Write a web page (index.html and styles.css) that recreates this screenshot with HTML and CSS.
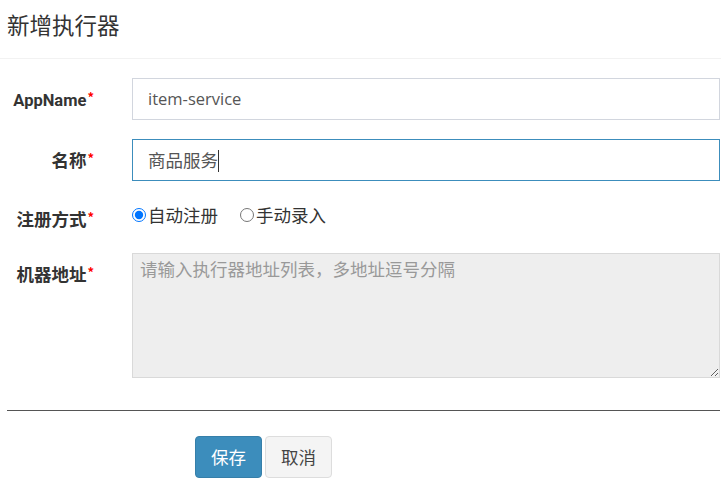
FILE: index.html
```html
<!DOCTYPE html>
<html lang="zh-CN">
<head>
<meta charset="utf-8">
<title>新增执行器</title>
<link rel="stylesheet" href="styles.css">
</head>
<body>
<div class="modal">
  <div class="header"><h4 class="title">新增执行器</h4></div>
  <form class="form">
    <div class="row">
      <label class="label lh42"><span class="latin">AppName</span><span class="req">*</span></label>
      <div class="control"><div class="field latin-field">item-service</div></div>
    </div>
    <div class="row">
      <label class="label lh42">名称<span class="req">*</span></label>
      <div class="control"><div class="field focus">商品服务<span class="caret"></span></div></div>
    </div>
    <div class="row row-radio">
      <label class="label lab-radio">注册方式<span class="req">*</span></label>
      <div class="control radios">
        <label class="radio"><input type="radio" name="addressType" checked>自动注册</label>
        <label class="radio"><input type="radio" name="addressType">手动录入</label>
      </div>
    </div>
    <div class="row">
      <label class="label lab-area">机器地址<span class="req">*</span></label>
      <div class="control"><textarea class="area" disabled placeholder="请输入执行器地址列表，多地址逗号分隔"></textarea></div>
    </div>
    <hr class="sep">
    <div class="actions">
      <button type="button" class="btn btn-primary">保存</button>
      <button type="button" class="btn btn-default">取消</button>
    </div>
  </form>
</div>
</body>
</html>
```
FILE: styles.css
```css
* { box-sizing: border-box; }
html, body { margin: 0; padding: 0; background: #fff; }
body {
  font-family: "Open Sans", "Noto Sans CJK SC", sans-serif;
  font-size: 17.5px;
  color: #333;
}
.header {
  height: 59px;
  border-bottom: 1px solid #f2f2f2;
  padding: 9px 0 0 7px;
}
.title {
  margin: 0;
  font-family: "Noto Sans CJK SC", sans-serif;
  font-weight: 400;
  font-size: 22.5px;
  line-height: 30px;
  color: #333;
}
.form {
  padding: 19px 1px 0 7px;
  margin: 0;
}
.row {
  display: flex;
  margin-bottom: 19px;
}
.label {
  width: 87px;
  flex: none;
  text-align: right;
  font-family: "Noto Sans CJK SC", sans-serif;
  font-weight: 700;
  font-size: 17.5px;
  color: #333;
  white-space: nowrap;
}
.latin {
  font-family: Roboto, sans-serif;
  font-size: 16.5px;
}
.lh42 { line-height: 42px; height: 42px; }
.lab-radio { line-height: 24px; padding-top: 7px; }
.lab-area { line-height: 24px; padding-top: 9px; }
.req {
  color: #f00;
  font-size: 13px;
  line-height: 0;
  vertical-align: 4px;
  font-weight: 700;
  margin-left: 1px;
}
.control {
  flex: 1;
  margin-left: 38px;
  min-width: 0;
}
.field {
  height: 42px;
  border: 1px solid #d2d6de;
  padding: 0 15px;
  line-height: 40px;
  color: #555;
  font-size: 17.5px;
  white-space: nowrap;
}
.latin-field { font-size: 16.5px; }
.field.focus {
  border-color: #3c8dbc;
  font-family: "Noto Sans CJK SC", sans-serif;
}
.caret {
  display: inline-block;
  width: 1px;
  height: 22px;
  background: #333;
  vertical-align: -5px;
}
.row-radio { height: 34px; }
.radios {
  display: flex;
  align-items: flex-start;
  padding-top: 3px;
  height: 34px;
  line-height: 24px;
  font-family: "Noto Sans CJK SC", sans-serif;
  color: #333;
}
.radio {
  display: flex;
  align-items: center;
  gap: 2px;
  height: 24px;
}
.radio + .radio { margin-left: 22px; }
.radio input {
  width: 14px;
  height: 14px;
  margin: 0;
  accent-color: #0075ff;
}
.area {
  display: block;
  width: 100%;
  height: 125px;
  margin: 0;
  border: 1px solid #d9d9d9;
  background: #eee;
  padding: 3px 7px;
  font-family: "Noto Sans CJK SC", sans-serif;
  font-size: 17.5px;
  line-height: 24px;
  color: #555;
  resize: vertical;
}
.area::placeholder { color: #999; opacity: 1; }
.sep {
  margin: 32px 0 0 0;
  border: 0;
  border-top: 1px solid #555;
  height: 0;
}
.actions {
  display: flex;
  gap: 3px;
  padding: 25px 0 0 188px;
}
.btn {
  height: 42px;
  width: 67px;
  padding: 0;
  border-radius: 4px;
  font-family: "Noto Sans CJK SC", sans-serif;
  font-size: 17.5px;
  line-height: 40px;
  cursor: pointer;
}
.btn-primary {
  background: #3c8dbc;
  border: 1px solid #367fa9;
  color: #fff;
}
.btn-default {
  background: #f4f4f4;
  border: 1px solid #ddd;
  color: #444;
}
```
